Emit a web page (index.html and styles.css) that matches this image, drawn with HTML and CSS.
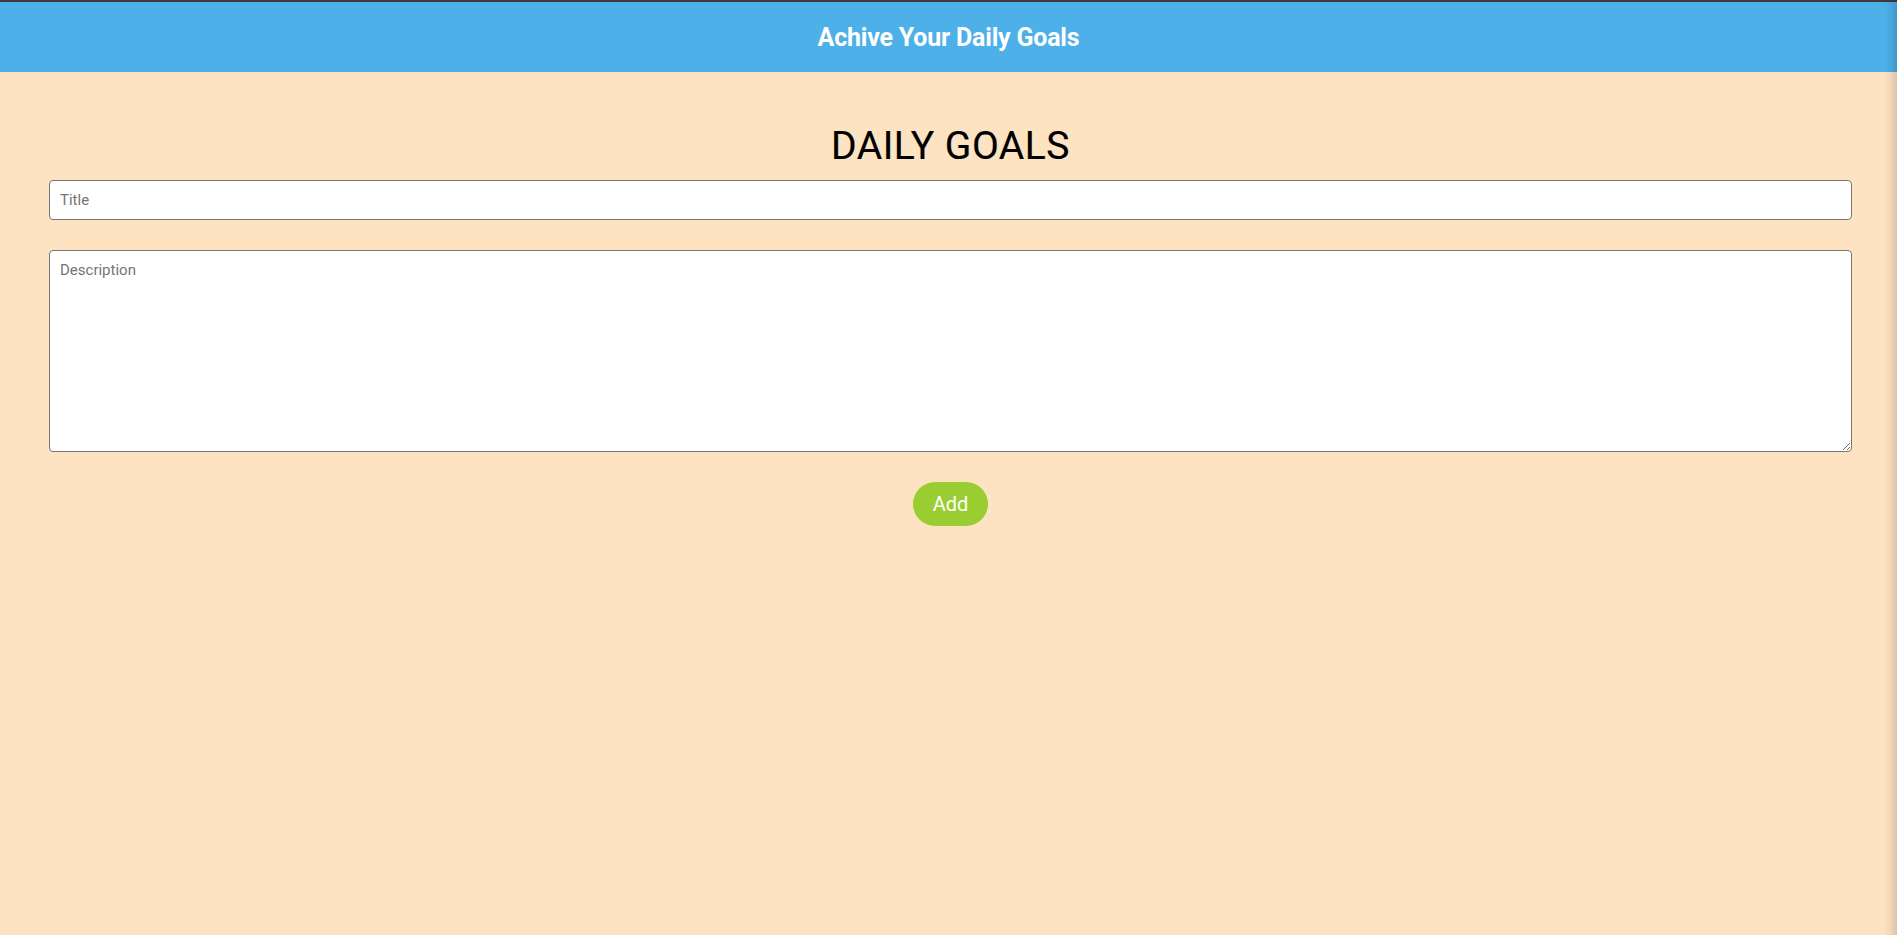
FILE: index.html
```html
<!DOCTYPE html>
<html lang="en">
<head>
<meta charset="utf-8">
<title>Daily Goals</title>
<link rel="stylesheet" href="styles.css">
</head>
<body>
<header class="topbar">
  <h2 class="topbar-title">Achive Your Daily Goals</h2>
</header>
<main class="content">
  <h1 class="page-title">DAILY GOALS</h1>
  <form class="goal-form">
    <input class="field field-title" type="text" placeholder="Title">
    <textarea class="field field-desc" placeholder="Description"></textarea>
    <button class="add-btn" type="button">Add</button>
  </form>
</main>
<div class="edge-shadow"></div>
</body>
</html>
```
FILE: styles.css
```css
* { box-sizing: border-box; }
html, body { height: 100%; }
body {
  margin: 0;
  background: #fee3c3;
  font-family: Roboto, "Liberation Sans", sans-serif;
  border-top: 2px solid #3c3c3c;
}
.topbar {
  height: 70px;
  background: #4eb0e9;
  display: flex;
  align-items: center;
  justify-content: center;
}
.topbar-title {
  margin: 0;
  color: #fff;
  font-size: 25px;
  font-weight: 700;
  letter-spacing: -0.2px;
}
.content {
  padding: 54px 45px 0 49px;
}
.page-title {
  margin: 0;
  text-align: center;
  font-size: 39px;
  font-weight: 400;
  letter-spacing: 0.5px;
  line-height: 41px;
  color: #000;
  -webkit-text-stroke: 0.2px #000;
}
.goal-form {
  margin-top: 13px;
  display: flex;
  flex-direction: column;
  align-items: center;
}
.field {
  width: 100%;
  border: 1px solid #767676;
  border-radius: 4px;
  background: #fff;
  font-family: Roboto, "Liberation Sans", sans-serif;
  font-size: 15px;
  color: #333;
  padding: 0 10px;
  outline: none;
}
.field::placeholder { color: #757575; }
.field-title { height: 40px; }
.field-desc {
  margin-top: 30px;
  height: 202px;
  padding-top: 10px;
  resize: vertical;
}
.add-btn {
  margin-top: 30px;
  width: 75px;
  height: 44px;
  border: none;
  border-radius: 22px;
  background: #9acd32;
  color: #fff;
  font-family: Roboto, "Liberation Sans", sans-serif;
  font-size: 20px;
  padding: 0;
}
.edge-shadow {
  position: fixed;
  top: 0;
  right: 0;
  width: 13px;
  height: 100%;
  pointer-events: none;
  background: linear-gradient(to right, rgba(0,0,0,0), rgba(0,0,0,0.05) 50%, rgba(0,0,0,0.14));
}
```
